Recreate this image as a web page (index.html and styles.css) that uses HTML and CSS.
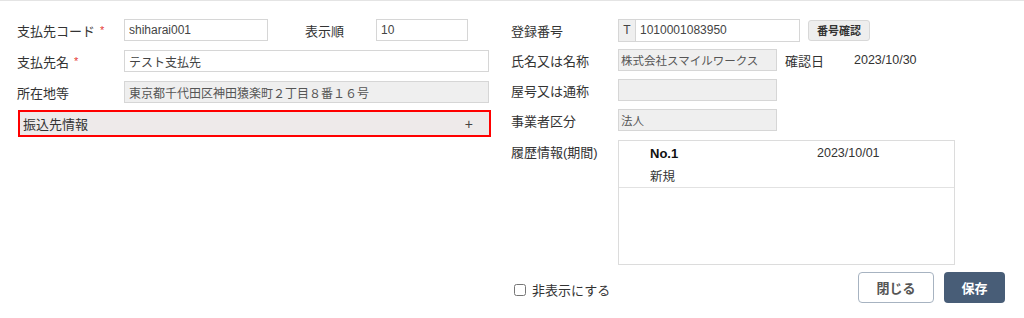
FILE: index.html
```html
<!DOCTYPE html>
<html lang="ja">
<head>
  <meta charset="UTF-8">
  <title>支払先編集</title>
  <link rel="stylesheet" href="styles.css">
</head>
<body>
  <div class="dialog">
    <div class="col-left">
      <div class="row">
        <label class="label">支払先コード<span class="req">*</span></label>
        <input class="form-input w-code" value="shiharai001">
        <label class="label label-order">表示順</label>
        <input class="form-input w-order" value="10">
      </div>
      <div class="row">
        <label class="label">支払先名<span class="req">*</span></label>
        <input class="form-input w-full" value="テスト支払先">
      </div>
      <div class="row">
        <label class="label">所在地等</label>
        <input class="form-input w-full readonly" value="東京都千代田区神田猿楽町２丁目８番１６号" readonly>
      </div>
      <div class="accordion">
        <span>振込先情報</span>
        <span class="plus">+</span>
      </div>
    </div>

    <div class="col-right">
      <div class="row">
        <label class="label">登録番号</label>
        <div class="input-group">
          <span class="prefix">T</span>
          <input class="form-input grouped" value="1010001083950">
        </div>
        <button class="btn-small">番号確認</button>
      </div>
      <div class="row">
        <label class="label">氏名又は名称</label>
        <input class="form-input w-mid readonly" value="株式会社スマイルワークス" readonly>
        <span class="label-date">確認日</span>
        <span class="date">2023/10/30</span>
      </div>
      <div class="row">
        <label class="label">屋号又は通称</label>
        <input class="form-input w-mid readonly" readonly>
      </div>
      <div class="row">
        <label class="label">事業者区分</label>
        <input class="form-input w-mid readonly" value="法人" readonly>
      </div>
      <div class="row history-row">
        <label class="label">履歴情報(期間)</label>
        <div class="history">
          <div class="history-item">
            <div class="history-head">
              <span class="no">No.1</span>
              <span class="hdate">2023/10/01</span>
            </div>
            <div class="history-type">新規</div>
          </div>
        </div>
      </div>
      <div class="footer">
        <label class="check"><input type="checkbox"> 非表示にする</label>
        <div class="actions">
          <button class="btn btn-close">閉じる</button>
          <button class="btn btn-save">保存</button>
        </div>
      </div>
    </div>
  </div>
</body>
</html>
```

FILE: styles.css
```css
body {
  margin: 0;
  font-family: "Liberation Sans", "Noto Sans CJK JP", sans-serif;
  font-size: 13px;
  color: #333;
  background-color: #fff;
}
.dialog {
  border-top: 1px solid #e4e4e4;
  display: flex;
  padding: 18px 0 0 17px;
  height: 317px;
  box-sizing: border-box;
}
.col-left {
  width: 474px;
  display: flex;
  flex-direction: column;
  gap: 9px;
}
.col-right {
  margin-left: 20px;
  flex: 1;
  display: flex;
  flex-direction: column;
  gap: 8px;
}
.row {
  display: flex;
  align-items: center;
  height: 22px;
}
.label {
  width: 107px;
  flex-shrink: 0;
}
.req {
  color: #e53935;
  font-size: 11px;
  margin-left: 5px;
  position: relative;
  top: -2px;
}
.label-order {
  width: 71px;
  margin-left: 37px;
}
.form-input {
  height: 22px;
  box-sizing: border-box;
  border: 1px solid #d6d6d6;
  padding: 0 4px;
  font-family: inherit;
  font-size: 12px;
  color: #444;
  background-color: #fff;
}
.readonly {
  background-color: #efefef;
  color: #555;
}
.w-code { width: 144px; }
.w-order { width: 92px; }
.w-full { width: 365px; }
.w-mid { width: 159px; }
.w-mid.readonly { font-size: 11.5px; padding: 0 2px; }
.accordion {
  margin-top: -2px;
  margin-left: 1px;
  height: 27px;
  box-sizing: border-box;
  border: 2px solid #f00;
  background-color: #eeeaea;
  display: flex;
  align-items: center;
  justify-content: space-between;
  padding: 0 16px 0 3px;
  font-size: 13px;
}
.plus {
  font-size: 14px;
  color: #444;
}
.input-group {
  display: flex;
  width: 182px;
  height: 23px;
}
.prefix {
  width: 24px;
  box-sizing: border-box;
  border: 1px solid #d6d6d6;
  border-right: none;
  background-color: #efefef;
  display: flex;
  align-items: center;
  justify-content: center;
  font-size: 12px;
  color: #444;
}
.grouped {
  flex: 1;
  height: 23px;
}
.btn-small {
  margin-left: 8px;
  height: 21px;
  padding: 0 8px;
  font-family: inherit;
  font-size: 11px;
  font-weight: bold;
  color: #333;
  background-color: #eeeeee;
  border: 1px solid #d8d8d8;
  border-radius: 3px;
}
.label-date {
  margin-left: 8px;
  width: 69px;
}
.date {
  font-size: 12.5px;
}
.history-row {
  align-items: flex-start;
  height: 125px;
  margin-top: 1px;
}
.history-row .label {
  margin-top: 2px;
}
.history {
  width: 337px;
  height: 125px;
  box-sizing: border-box;
  border: 1px solid #dcdcdc;
}
.history-item {
  height: 46px;
  border-bottom: 1px solid #e2e2e2;
  padding-left: 31px;
}
.history-head {
  display: flex;
  padding-top: 3px;
  height: 18px;
  align-items: center;
}
.no {
  width: 167px;
  font-weight: bold;
  color: #111;
  font-size: 13px;
}
.hdate {
  font-size: 12.5px;
}
.history-type {
  margin-top: 4px;
  font-size: 12.5px;
}
.footer {
  display: flex;
  justify-content: space-between;
  align-items: center;
  margin-top: -1px;
  padding-right: 19px;
}
.check {
  display: flex;
  align-items: center;
  gap: 6px;
  margin-top: 4px;
  font-size: 13px;
}
.check input {
  margin: 0 0 0 3px;
  width: 12px;
  height: 12px;
}
.actions {
  display: flex;
  gap: 10px;
}
.btn {
  height: 31px;
  border-radius: 4px;
  font-family: inherit;
  font-size: 13px;
  font-weight: bold;
  cursor: pointer;
}
.btn-close {
  width: 76px;
  background-color: #fff;
  color: #555;
  border: 1px solid #a7b3c1;
}
.btn-save {
  width: 61px;
  background-color: #485d77;
  color: #fff;
  border: none;
}
```
